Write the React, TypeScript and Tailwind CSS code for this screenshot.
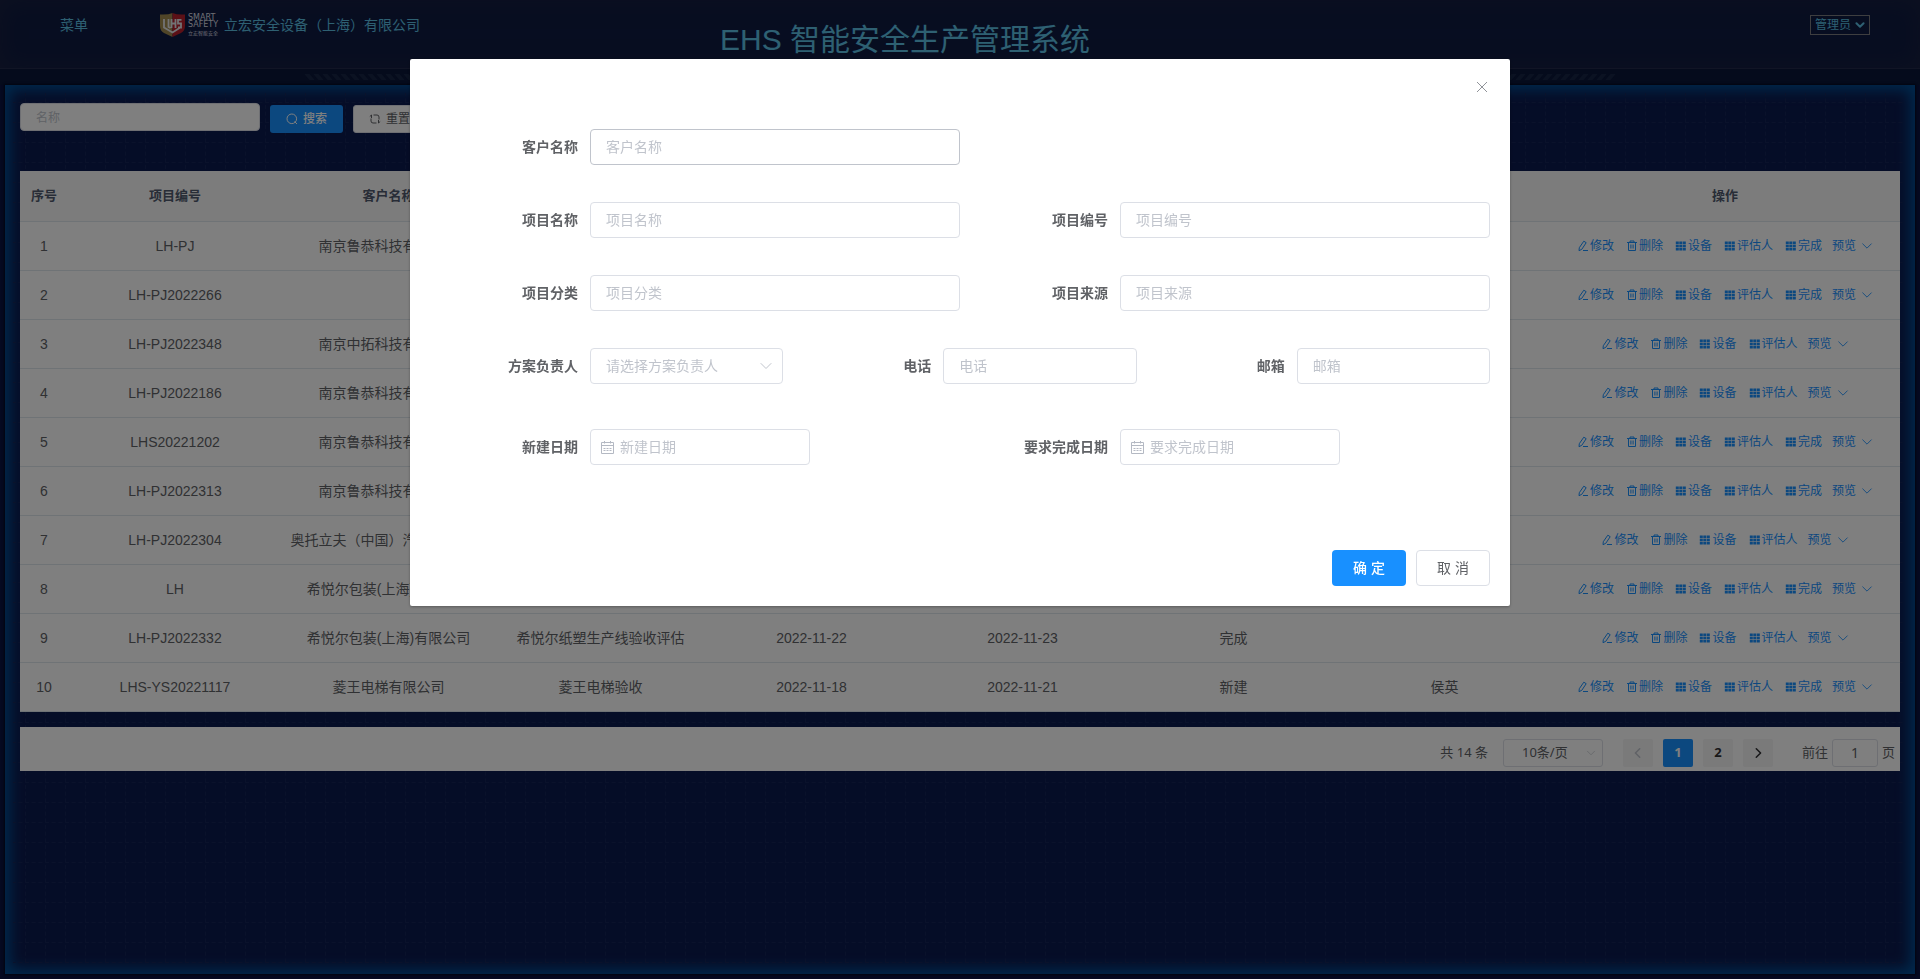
import React from "react";

type Row = { no: string; customer: string; name: string; start: string; end: string; state: string; owner: string; done: boolean };

const rows: Row[] = [
  { no: "LH-PJ", customer: "南京鲁恭科技有限公司", name: "", start: "", end: "", state: "", owner: "", done: true },
  { no: "LH-PJ2022266", customer: "", name: "", start: "", end: "", state: "", owner: "", done: true },
  { no: "LH-PJ2022348", customer: "南京中拓科技有限公司", name: "", start: "", end: "", state: "", owner: "", done: false },
  { no: "LH-PJ2022186", customer: "南京鲁恭科技有限公司", name: "", start: "", end: "", state: "", owner: "", done: false },
  { no: "LHS20221202", customer: "南京鲁恭科技有限公司", name: "", start: "", end: "", state: "", owner: "", done: true },
  { no: "LH-PJ2022313", customer: "南京鲁恭科技有限公司", name: "", start: "", end: "", state: "", owner: "", done: true },
  { no: "LH-PJ2022304", customer: "奥托立夫（中国）汽车有限公司", name: "", start: "", end: "", state: "", owner: "", done: false },
  { no: "LH", customer: "希悦尔包装(上海)有限公司", name: "", start: "", end: "", state: "", owner: "", done: true },
  { no: "LH-PJ2022332", customer: "希悦尔包装(上海)有限公司", name: "希悦尔纸塑生产线验收评估", start: "2022-11-22", end: "2022-11-23", state: "完成", owner: "", done: false },
  { no: "LHS-YS20221117", customer: "菱王电梯有限公司", name: "菱王电梯验收", start: "2022-11-18", end: "2022-11-21", state: "新建", owner: "侯英", done: true },
];

const heads = ["序号", "项目编号", "客户名称", "项目名称", "新建日期", "完成日期", "状态", "负责人", "操作"];

function Chevron({ className, d = "M2 4.5l5 5 5-5" }: { className: string; d?: string }) {
  return (
    <svg viewBox="0 0 14 14" className={className} fill="none" stroke="currentColor" strokeLinecap="round" strokeLinejoin="round">
      <path d={d} />
    </svg>
  );
}

function EditIcon() {
  return (
    <svg viewBox="0 0 12 12" className="size-3" fill="none" stroke="currentColor">
      <path d="M6.8 1.200l2.400 1.500L4.800 9.300 2 10.700l.3-3zM6 10.500h5" />
    </svg>
  );
}

function TrashIcon() {
  return (
    <svg viewBox="0 0 12 12" className="size-3" fill="none" stroke="currentColor">
      <path d="M1 2.500h10M4 2.500v-1.500h4v1.500M2.500 2.500v8h7v-8M4.900 4.500v4M7.100 4.500v4" />
    </svg>
  );
}

function GridIcon() {
  return (
    <svg viewBox="0 0 12 12" className="size-3" fill="currentColor">
      {[1.5, 4.7, 7.9].map((y) => [0.8, 4.3, 7.8].map((x) => <rect key={`${x}-${y}`} x={x} y={y} width="3" height="2.600" />))}
    </svg>
  );
}

function Action({ icon, text }: { icon: React.ReactNode; text: string }) {
  return (
    <button type="button" className="flex items-center gap-px">
      {icon}
      {text}
    </button>
  );
}

function Logo() {
  return (
    <div className="flex items-center gap-[3px]">
      <svg viewBox="0 0 25 24" className="h-6 w-[25px]">
        <path d="M0 1.500Q8 2 12.500 0V24L4 20Q0 18 0 13z" fill="#a08a50" />
        <path d="M25 1.500Q17 2 12.500 0V24L21 20Q25 18 25 13z" fill="#b8202c" />
        <path d="M4 6v8.500L12.500 19.500l7-4.500M8.500 6v8l2 1M11.500 6v9M11.500 10.500h4M15.500 6v9M21.500 6.800h-3.500v3.700h3v4h-3" fill="none" stroke="#e6e6ea" strokeWidth="1.800" />
      </svg>
      <div className="flex w-[31px] flex-col items-start font-['DejaVu_Sans','Noto_Sans_CJK_SC',sans-serif] text-[8px] leading-[7px] text-[#dcdee6]">
        <span>SMART</span>
        <span>SAFETY</span>
        <span className="mt-[2px] text-[5px] leading-[6px] whitespace-nowrap">立宏智能安全</span>
      </div>
    </div>
  );
}

const box = "h-9 w-full rounded border bg-white px-[15px] text-[14px] placeholder:text-[#c0c4cc] outline-none ";

function Field({ id, label, children }: { id: string; label: string; children: React.ReactNode }) {
  return (
    <div className="flex items-center">
      <label htmlFor={id} className="w-[120px] shrink-0 pr-3 text-right text-[14px] font-bold text-[#606266]">
        {label}
      </label>
      <div className="min-w-0 flex-1">{children}</div>
    </div>
  );
}

function TextField({ id, label, active }: { id: string; label: string; active?: boolean }) {
  return (
    <Field id={id} label={label}>
      <input id={id} type="text" placeholder={label} className={box + (active ? "border-[#c0c4cc]" : "border-[#dcdfe6]")} />
    </Field>
  );
}

function DateField({ id, label }: { id: string; label: string }) {
  return (
    <Field id={id} label={label}>
      <div className="flex h-9 w-[220px] items-center gap-[6px] rounded border border-[#dcdfe6] bg-white pl-[9px]">
        <svg viewBox="0 0 14 14" className="size-[14px] shrink-0" fill="none" stroke="#b4b9c3">
          <path d="M1.500 2.500h12v11h-12zM1.500 5.500h12M4.500 1v2.500M10.500 1v2.500M3.500 8.500h2M6.500 8.500h2M9.500 8.500h2M3.500 10.500h2M6.500 10.500h2M9.500 10.500h2" />
        </svg>
        <input id={id} type="text" placeholder={label} className="w-full min-w-0 text-[14px] outline-none placeholder:text-[#c0c4cc]" />
      </div>
    </Field>
  );
}

function Dialog() {
  return (
    <div className="fixed inset-0 z-10 overflow-auto bg-black/50">
      <form
        role="dialog"
        aria-label="项目"
        className="relative mx-auto mt-[59px] flex w-[1100px] max-w-full flex-col rounded-[2px] bg-white pt-[70px] pr-5 pb-5 pl-[60px] shadow-[0_1px_3px_rgba(0,0,0,0.3)]"
      >
        <button type="button" aria-label="关闭" className="absolute top-5 right-5 text-[#909399]">
          <svg viewBox="0 0 16 16" className="size-4" fill="none" stroke="currentColor">
            <path d="M3 3l10 10M13 3L3 13" />
          </svg>
        </button>
        <div className="grid grid-cols-2 gap-x-10 gap-y-[37px]">
          <TextField id="customer" label="客户名称" active />
          <span />
          <TextField id="name" label="项目名称" />
          <TextField id="number" label="项目编号" />
          <TextField id="category" label="项目分类" />
          <TextField id="source" label="项目来源" />
        </div>
        <div className="mt-[37px] grid grid-cols-3 gap-x-10">
          <Field id="owner" label="方案负责人">
            <div className="grid items-center">
              <select id="owner" className={box + "col-start-1 row-start-1 appearance-none border-[#dcdfe6] text-[#c0c4cc]"}>
                <option>请选择方案负责人</option>
              </select>
              <Chevron className="pointer-events-none col-start-1 row-start-1 mr-[10px] size-[14px] justify-self-end text-[#c0c4cc]" />
            </div>
          </Field>
          <TextField id="phone" label="电话" />
          <TextField id="mail" label="邮箱" />
        </div>
        <div className="mt-[45px] grid grid-cols-2 gap-x-10">
          <DateField id="created" label="新建日期" />
          <DateField id="due" label="要求完成日期" />
        </div>
        <div className="mt-[85px] flex justify-end gap-[10px] text-[14px]">
          <button type="submit" className="h-9 w-[74px] rounded bg-[#1890ff] font-medium text-white">确 定</button>
          <button type="button" className="h-9 w-[74px] rounded border border-[#dcdfe6] bg-white text-[#606266]">取 消</button>
        </div>
      </form>
    </div>
  );
}

function Pager() {
  const page = "flex h-7 w-[30px] items-center justify-center rounded-[2px] font-bold ";
  return (
    <nav className="mt-[15px] flex h-11 items-center justify-end bg-white pt-[7px] pr-[5px] font-['Noto_Sans','Noto_Sans_CJK_SC',sans-serif] text-[13px] text-[#606266]">
      <span>共 14 条</span>
      <div className="ml-[15px] grid items-center">
        <select aria-label="每页条数" className="col-start-1 row-start-1 h-7 w-[100px] appearance-none rounded-[3px] border border-[#dcdfe6] pl-[18px]">
          <option>10条/页</option>
        </select>
        <Chevron className="pointer-events-none col-start-1 row-start-1 mr-[7px] size-[10px] justify-self-end text-[#c0c4cc]" />
      </div>
      <div className="ml-5 flex gap-[10px] text-[#303133]">
        <button type="button" aria-label="上一页" className={page + "bg-[#f4f4f5] text-[#c0c4cc]"}>
          <Chevron className="size-3 stroke-[1.8]" d="M9 2l-5 5 5 5" />
        </button>
        <button type="button" className={page + "bg-[#1890ff] text-white"}>1</button>
        <button type="button" className={page + "bg-[#f4f4f5]"}>2</button>
        <button type="button" aria-label="下一页" className={page + "bg-[#f4f4f5]"}>
          <Chevron className="size-3 stroke-[1.8]" d="M5 2l5 5-5 5" />
        </button>
      </div>
      <label htmlFor="jump" className="ml-[29px] mr-1">前往</label>
      <input id="jump" type="text" defaultValue="1" className="h-7 w-[46px] rounded-[3px] border border-[#dcdfe6] text-center text-[14px]" />
      <span className="ml-1">页</span>
    </nav>
  );
}

export default function App() {
  return (
    <div className="flex min-h-screen flex-col bg-[#0a1240] pb-[5px] font-['Liberation_Sans','Noto_Sans_CJK_SC',sans-serif] text-[14px] text-[#606266]">
      <header className="grid h-[69px] grid-cols-[1fr_auto_1fr] items-start border-b border-[#232a4a] bg-[#0f1b42] px-[60px] text-[#5cc0e4] shadow-[inset_0_0_24px_rgba(30,36,64,0.8)]">
        <div className="flex items-center pt-[13px]">
          <a href="#menu" className="w-[100px]">菜单</a>
          <Logo />
          <span className="ml-[5px]">立宏安全设备（上海）有限公司</span>
        </div>
        <h1 className="mr-[110px] pt-[17px] text-[30px] leading-[46px]">EHS 智能安全生产管理系统</h1>
        <button type="button" className="mt-[15px] mr-[-10px] flex h-5 w-[60px] items-center justify-center gap-1 justify-self-end border border-[#7c7c80] text-[12px]">
          管理员
          <Chevron className="size-[10px] stroke-[2.800]" />
        </button>
      </header>
      <div className="flex h-4 justify-center bg-[#0a1638] pt-[5px]">
        <svg className="h-[6px] w-[1312px] max-w-full" viewBox="0 0 1312 6">
          <g stroke="#162444" strokeWidth="4">
            {Array.from({ length: 72 }, (_, i) => (
              <path key={i} d={`M${2 + i * 9} -1l7 8M${1310 - i * 9} -1l-7 8`} />
            ))}
          </g>
        </svg>
      </div>
      <main className="relative isolate mx-[5px] flex-1 bg-[#0b1a4e] px-[15px] pt-[18px] shadow-[inset_0_0_14px_5px_#00529a,0_0_2px_1px_#020820]">
        <svg aria-hidden="true" className="absolute inset-0 -z-10 h-full w-full">
          <defs>
            <pattern id="grid" width="20" height="20" patternUnits="userSpaceOnUse">
              <path d="M.5 0v20M0 17.500h20" stroke="#152456" strokeDasharray="4 2.700" fill="none" />
            </pattern>
          </defs>
          <rect x="8" y="8" width="99%" height="98%" fill="url(#grid)" />
        </svg>
        <div className="flex items-start gap-[10px]">
          <input aria-label="名称" type="text" placeholder="名称" className="h-7 w-[240px] rounded border border-[#dcdfe6] bg-white px-[15px] pt-[2px] text-[12px] placeholder:text-[#c0c4cc]" />
          <button type="button" className="mt-[2px] flex h-7 w-[73px] items-center justify-center gap-[5px] rounded-[3px] bg-[#1890ff] text-[12px] font-medium text-white">
            <svg viewBox="0 0 12 12" className="size-3" fill="none" stroke="currentColor">
              <circle cx="5.800" cy="5.800" r="4.800" />
              <path d="M8.500 8.500l2.500 2.500" />
            </svg>
            搜索
          </button>
          <button type="button" className="mt-[2px] flex h-7 w-[73px] items-center justify-center gap-[5px] rounded-[3px] border border-[#dcdfe6] bg-white text-[12px]">
            <svg viewBox="0 0 12 12" className="size-3" fill="none" stroke="currentColor">
              <path d="M4.500 2H8Q10 2 10 4v2.500M7.500 10H4Q2 10 2 8V5.500M.8 3.500L2.500 2v3M11.200 8.500L9.500 10V7" />
            </svg>
            重置
          </button>
        </div>
        <table className="mt-[38px] w-full table-fixed border-separate border-spacing-0 bg-white text-center">
          <colgroup>
            <col className="w-[48px]" />
            <col className="w-[214px]" />
            <col className="w-[213px]" />
            <col span={5} />
            <col className="w-[350px]" />
          </colgroup>
          <thead>
            <tr className="h-[51px]">
              {heads.map((h) => (
                <th key={h} className="border-b border-[#dfe6ec] bg-[#f8f8f9] text-[13px] font-bold text-[#515a6e]">{h}</th>
              ))}
            </tr>
          </thead>
          <tbody>
            {rows.map((r, i) => (
              <tr key={i} className="h-[49px] *:border-b *:border-[#dfe6ec]">
                <td>{i + 1}</td>
                <td>{r.no}</td>
                <td className="whitespace-nowrap">{r.customer}</td>
                <td>{r.name}</td>
                <td>{r.start}</td>
                <td>{r.end}</td>
                <td>{r.state}</td>
                <td>{r.owner}</td>
                <td>
                  <div className="flex justify-center gap-[10px] text-[12px] text-[#1890ff]">
                    <div className="flex gap-3">
                      <Action icon={<EditIcon />} text="修改" />
                      <Action icon={<TrashIcon />} text="删除" />
                      <Action icon={<GridIcon />} text="设备" />
                      <Action icon={<GridIcon />} text="评估人" />
                      {r.done && <Action icon={<GridIcon />} text="完成" />}
                    </div>
                    <button type="button" className="flex items-center gap-[5px]">
                      预览
                      <Chevron className="size-3" />
                    </button>
                  </div>
                </td>
              </tr>
            ))}
          </tbody>
        </table>
        <Pager />
      </main>
      <Dialog />
    </div>
  );
}
